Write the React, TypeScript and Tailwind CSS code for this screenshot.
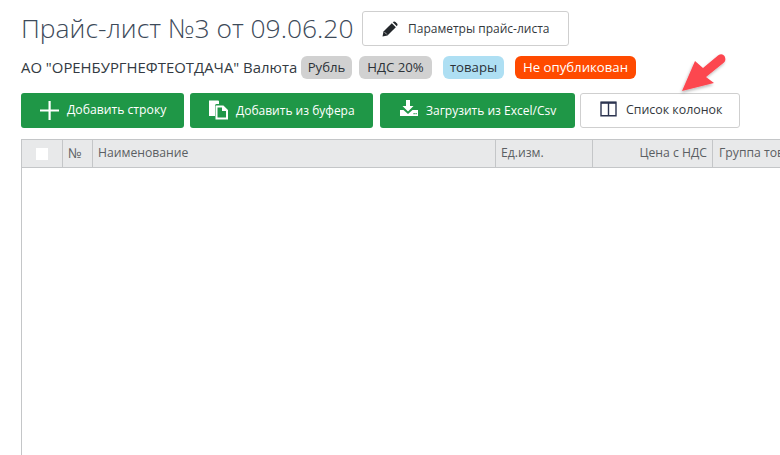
const font = { fontFamily: '"Open Sans", sans-serif' };

function Chip({ className, children }: { className: string; children: React.ReactNode }) {
  return (
    <span className={`flex h-[23px] items-center justify-center rounded-[6px] text-[13.2px] ${className}`}>{children}</span>
  );
}

function GreenButton({ className, icon, children }: { className: string; icon: React.ReactNode; children: React.ReactNode }) {
  return (
    <div className={`flex h-[35px] items-center whitespace-nowrap rounded-[3px] bg-[#1f9747] text-white ${className}`}>
      {icon}
      {children}
    </div>
  );
}

function Th({ className, children }: { className: string; children?: React.ReactNode }) {
  return (
    <div className={`flex h-full shrink-0 items-center border-r border-[#c4c6c8] text-[12.2px] text-[#5b5f63] ${className}`}>
      {children}
    </div>
  );
}

export default function App() {
  return (
    <div className="relative h-[455px] w-[780px] overflow-hidden bg-white" style={font}>
      <div className="pl-[21px] pt-[11px]">
        <div className="flex h-[35px] items-center">
          <h1 className="w-[341px] whitespace-nowrap text-[26.4px] font-light text-[#3d4a59]">Прайс-лист №3 от 09.06.20</h1>
          <div className="flex h-[35px] w-[207px] items-center rounded-[3px] border border-[#cfcfcf] pl-[19px] text-[12px] text-[#33383d]">
            <svg width="16" height="16" viewBox="0 0 16 16" className="mr-[10px]" fill="#23272b">
              <path d="M0.500 15.500l1-5L9.800 2.200l4 4-8.300 8.300z" />
              <path d="M11 1c.8-.8 1.800-.8 2.500 0l1.500 1.500c.7.7.7 1.700 0 2.400l-.2.300-4-4z" />
              <path d="M2.600 11.200l2.200 2.200" stroke="white" strokeWidth="0.7" />
            </svg>
            Параметры прайс-листа
          </div>
        </div>
        <div className="mt-[10px] flex h-[23px] items-center text-[14.9px] text-[#333a42]">
          <span className="w-[280px] whitespace-nowrap">АО "ОРЕНБУРГНЕФТЕОТДАЧА" Валюта</span>
          <Chip className="w-[51px] bg-[#d1d1d1] text-[#2c3238]">Рубль</Chip>
          <Chip className="ml-[7px] w-[73px] bg-[#d1d1d1] text-[#2c3238]">НДС 20%</Chip>
          <Chip className="ml-[11px] w-[61px] bg-[#aedff3] text-[#2c3238]">товары</Chip>
          <Chip className="ml-[11px] w-[121px] bg-[#ff4a00] text-white">Не опубликован</Chip>
        </div>
        <div className="mt-[14px] flex">
          <GreenButton
            className="w-[163px] pl-[19px] text-[12.2px]"
            icon={
              <svg width="19" height="19" viewBox="0 0 19 19" className="mr-[8px]" fill="white">
                <path d="M8.500 0h2.200v8.400H19v2.200h-8.300V19H8.500v-8.400H0V8.400h8.500z" />
              </svg>
            }
          >
            Добавить строку
          </GreenButton>
          <GreenButton
            className="ml-[6px] w-[183px] pl-[18px] text-[12px]"
            icon={
              <svg width="20" height="21" viewBox="0 0 20 21" className="mr-[8px] mb-[3px]">
                <path d="M1 1.500h9a1 1 0 0 1 1 1V5H8.500A1.500 1.500 0 0 0 7 6.500V17H1z" fill="white" />
                <path d="M8.500 7.500v12H19v-8l-4-4z" fill="none" stroke="white" strokeWidth="2" />
                <path d="M14 7v5h5z" fill="white" />
              </svg>
            }
          >
            Добавить из буфера
          </GreenButton>
          <GreenButton
            className="ml-[7px] w-[195px] pl-[20px] text-[12px]"
            icon={
              <svg width="18" height="18" viewBox="0 0 18 18" className="mr-[8px] mb-[5px]">
                <path d="M6 1h4v6h3.500L8 12.500 2.500 7H6z" fill="white" />
                <path d="M0 11h3.500L8 15l4.500-4H18v6H0z" fill="white" />
                <path d="M13.500 14h1.200v1.200h-1.200zM15.500 14h1.200v1.200h-1.200z" fill="#1f9747" />
              </svg>
            }
          >
            Загрузить из Excel/Csv
          </GreenButton>
          <div className="ml-[5px] flex h-[35px] w-[160px] items-center whitespace-nowrap rounded-[3px] border border-[#cfcfcf] pl-[19px] text-[12.4px] text-[#33383d]">
            <svg width="17" height="16" viewBox="0 0 17 16" className="mr-[9px] mb-[3px]" fill="none" stroke="#2c3450" strokeWidth="1.400">
              <path d="M1 1.200h15v13.600H1zM8.500 1.200v13.600" />
              <path d="M1 1.800h15" strokeWidth="2" />
            </svg>
            Список колонок
          </div>
        </div>
      </div>
      <div className="ml-[21px] mt-[11px] h-[316px] border-l border-[#c4c6c8]">
        <div className="flex h-[29px] items-center border-y border-[#c4c6c8] bg-[#e8e9ea]">
          <Th className="w-[41px] justify-center">
            <span className="h-[12px] w-[12px] bg-white" />
          </Th>
          <Th className="w-[30px] pl-[5px] text-[13.5px]">№</Th>
          <Th className="w-[403px] pl-[5px]">Наименование</Th>
          <Th className="w-[97px] pl-[5px]">Ед.изм.</Th>
          <Th className="w-[120px] justify-end pr-[5px]">Цена с НДС</Th>
          <Th className="w-[80px] whitespace-nowrap border-r-0 pl-[6px]">Группа товаров</Th>
        </div>
      </div>
      <svg className="absolute left-[676px] top-[50px]" width="54" height="46" viewBox="0 0 54 46">
        <defs>
          <filter id="s" x="-20%" y="-20%" width="140%" height="140%">
            <feDropShadow dx="-1" dy="2" stdDeviation="1.500" floodColor="#000" floodOpacity="0.28" />
          </filter>
        </defs>
        <path
          d="M6 41 L19 11 L27 18 L42 5.500 Q46 3 48.500 6 Q50.500 10 48 12.500 L30 27 L38 33 Z"
          fill="#fc4650"
          filter="url(#s)"
        />
      </svg>
    </div>
  );
}
